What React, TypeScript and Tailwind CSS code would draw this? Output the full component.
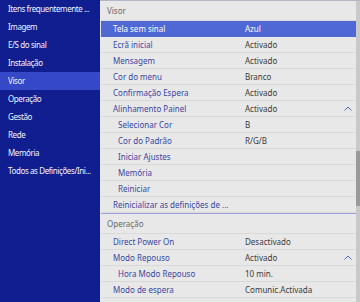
import { ReactNode } from "react";

const MENU = [
  "Itens frequentemente ...",
  "Imagem",
  "E/S do sinal",
  "Instalação",
  "Visor",
  "Operação",
  "Gestão",
  "Rede",
  "Memória",
  "Todos as Definições/Ini...",
];

interface Row {
  label: string;
  value?: string;
  sub?: boolean;
  open?: boolean;
  active?: boolean;
}

const VISOR: Row[] = [
  { label: "Tela sem sinal", value: "Azul", active: true },
  { label: "Ecrã inicial", value: "Activado" },
  { label: "Mensagem", value: "Activado" },
  { label: "Cor do menu", value: "Branco" },
  { label: "Confirmação Espera", value: "Activado" },
  { label: "Alinhamento Painel", value: "Activado", open: true },
  { label: "Selecionar Cor", value: "B", sub: true },
  { label: "Cor do Padrão", value: "R/G/B", sub: true },
  { label: "Iniciar Ajustes", sub: true },
  { label: "Memória", sub: true },
  { label: "Reiniciar", sub: true },
  { label: "Reinicializar as definições de ..." },
];

const OPERACAO: Row[] = [
  { label: "Direct Power On", value: "Desactivado" },
  { label: "Modo Repouso", value: "Activado", open: true },
  { label: "Hora Modo Repouso", value: "10 min.", sub: true },
  { label: "Modo de espera", value: "Comunic.Activada" },
  { label: "Indicadores", value: "Activado" },
];

function Chevron() {
  return (
    <svg width="8" height="5" viewBox="0 0 8 5" fill="none">
      <path d="M0.5 4.5 L4 1 L7.5 4.5" stroke="#4b58a8" strokeWidth="0.9" />
    </svg>
  );
}

function SettingRow({ row }: { row: Row }) {
  return (
    <div
      className={
        "flex h-[16px] shrink-0 items-center border-b " +
        (row.active
          ? "border-[#5068d4] bg-[#5068d4] text-white"
          : "border-[#d9d9d9] text-[#3a46a0]")
      }
    >
      <div
        className={
          "w-[144px] shrink-0 whitespace-nowrap " +
          (row.sub ? "pl-[17px]" : "pl-[12px]")
        }
      >
        {row.label}
      </div>
      <div
        className={
          "flex-1 whitespace-nowrap " +
          (row.active ? "text-white" : "text-[#3a3a3a]")
        }
      >
        {row.value}
      </div>
      <div className="flex w-[16px] justify-center">
        {row.open && <Chevron />}
      </div>
    </div>
  );
}

function Section({ title, children }: { title: string; children: ReactNode }) {
  return (
    <>
      <div className="flex h-[20px] shrink-0 items-center border-b border-[#d9d9d9] pl-[6px] text-[#6a6a6a]">
        {title}
      </div>
      {children}
    </>
  );
}

export default function App() {
  return (
    <div
      className="flex h-[302px] w-[360px] overflow-hidden text-[8px] leading-[12px]"
      style={{ fontFamily: '"Noto Sans", sans-serif' }}
    >
      <nav className="w-[100px] shrink-0 bg-[#111e8f]">
        {MENU.map((item) => (
          <div
            key={item}
            className={
              "flex h-[18px] items-center whitespace-nowrap pl-[8px] tracking-[-0.4px] text-[#f2f3ff] " +
              (item === "Visor" ? "bg-[#3548c8]" : "")
            }
          >
            {item}
          </div>
        ))}
      </nav>

      <main className="flex flex-1 border-t border-[#b4b6c8] bg-[#e8e8e8]">
        <div className="flex flex-1 flex-col pl-[1px]">
          <Section title="Visor">
            {VISOR.map((row) => (
              <SettingRow key={row.label} row={row} />
            ))}
          </Section>
          <div className="h-px shrink-0 bg-[#9ea3dc]" />
          <Section title="Operação">
            {OPERACAO.map((row) => (
              <SettingRow key={row.label} row={row} />
            ))}
          </Section>
        </div>
        <div className="flex w-[4px] flex-col bg-[#c9c9c9]">
          <div className="h-[150px]" />
          <div className="h-[55px] bg-[#9a9a9a]" />
        </div>
      </main>
    </div>
  );
}
